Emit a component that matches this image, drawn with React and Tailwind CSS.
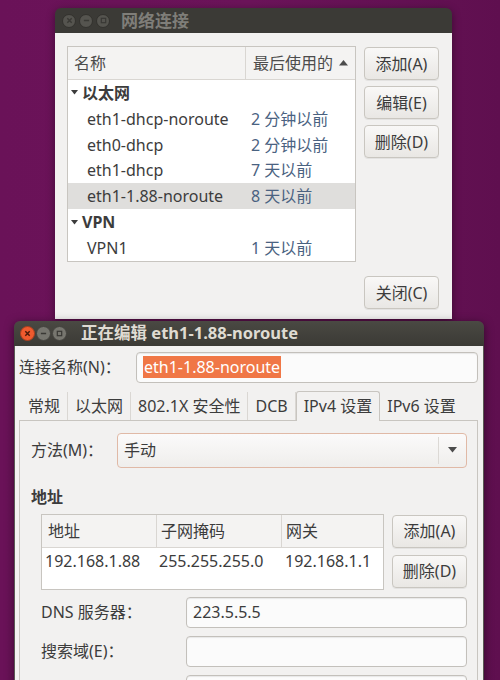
import React from 'react';

const font = { fontFamily: '"Noto Sans", "Noto Sans CJK SC", sans-serif' };

const WinButtons = ({ active }) => {
  const size = active ? 'w-[15px] h-[15px]' : 'w-[14px] h-[14px]';
  const grey = active ? 'bg-[#77766f] border-[#44433f]' : 'bg-[#55544f] border-[#33322e]';
  return (
    <div className={`flex items-center ${active ? 'gap-[1px]' : 'gap-[3px]'}`}>
      <span className={`${size} rounded-full flex items-center justify-center border ${active ? 'bg-[#ef5a2e] border-[#a8401f]' : grey}`}>
        <svg width="7" height="7" viewBox="0 0 8 8">
          <path d="M1.5 1.5 L6.5 6.5 M6.5 1.5 L1.5 6.5" stroke={active ? '#4a1a0a' : '#3a3935'} strokeWidth="1.7" />
        </svg>
      </span>
      <span className={`${size} rounded-full flex items-center justify-center border ${grey}`}>
        <svg width="7" height="7" viewBox="0 0 8 8">
          <path d="M1 4 L7 4" stroke="#3a3935" strokeWidth="1.7" />
        </svg>
      </span>
      <span className={`${size} rounded-full flex items-center justify-center border ${grey}`}>
        <svg width="7" height="7" viewBox="0 0 8 8">
          <rect x="1.5" y="1.5" width="5" height="5" fill="none" stroke="#3a3935" strokeWidth="1.4" />
        </svg>
      </span>
    </div>
  );
};

const Btn = ({ children, className = '' }) => (
  <div
    className={`flex items-center justify-center rounded-[4px] border border-[#c9c6c0] bg-gradient-to-b from-[#f9f8f7] to-[#e9e7e4] text-[16px] text-[#3c3c3c] shadow-[0_1px_0_rgba(0,0,0,0.06)] ${className}`}
  >
    {children}
  </div>
);

const Tri = () => (
  <svg width="7" height="5" viewBox="0 0 7 5" className="mr-[4px]">
    <path d="M0 0 L7 0 L3.5 4.5 Z" fill="#3c3c3c" />
  </svg>
);

const conns = [
  { type: 'cat', name: '以太网' },
  { name: 'eth1-dhcp-noroute', time: '2 分钟以前' },
  { name: 'eth0-dhcp', time: '2 分钟以前' },
  { name: 'eth1-dhcp', time: '7 天以前' },
  { name: 'eth1-1.88-noroute', time: '8 天以前', selected: true },
  { type: 'cat', name: 'VPN' },
  { name: 'VPN1', time: '1 天以前' },
];

const tabs = ['常规', '以太网', '802.1X 安全性', 'DCB', 'IPv4 设置', 'IPv6 设置'];

const Input = ({ children, className = '' }) => (
  <div className={`flex items-center rounded-[4px] border border-[#c3c0bb] bg-[#fbfbfb] px-[6px] text-[16px] text-[#3c3c3c] shadow-[inset_0_1px_1px_rgba(0,0,0,0.08)] ${className}`}>
    {children}
  </div>
);

export default function App() {
  return (
    <div className="relative w-[500px] h-[680px] overflow-hidden bg-gradient-to-r from-[#6a1258] via-[#6c145a] to-[#5f0f4f]" style={font}>
      {/* network connections window */}
      <div className="absolute left-[55px] top-[8px] w-[397px] h-[311px] flex flex-col rounded-t-[6px] overflow-hidden shadow-[0_2px_8px_rgba(0,0,0,0.4)]">
        <div className="h-[25px] bg-[#3b3a36] flex items-center pl-[7px]">
          <WinButtons />
          <span className="ml-[11px] text-[17px] font-bold text-[#7f7e79]">网络连接</span>
        </div>
        <div className="flex-1 bg-[#f2f1f0] flex flex-col px-[12px] pt-[13px]">
          <div className="flex gap-[8px]">
            <div className="w-[289px] h-[216px] border border-[#c8c5c0] bg-white flex flex-col">
              <div className="h-[33px] flex bg-[#f4f3f2] border-b border-[#d9d6d2] text-[16px] text-[#4c4c4c]">
                <div className="w-[178px] flex items-center pl-[6px] border-r border-[#d9d6d2]">名称</div>
                <div className="flex-1 flex items-center pl-[7px]">
                  最后使用的
                  <svg width="9" height="6" viewBox="0 0 9 6" className="ml-[6px]">
                    <path d="M0 5.5 L9 5.5 L4.5 0 Z" fill="#4c4c4c" />
                  </svg>
                </div>
              </div>
              {conns.map((c) =>
                c.type === 'cat' ? (
                  <div key={c.name} className="h-[26px] flex items-center pl-[3px] text-[16px] font-bold text-[#3c3c3c]">
                    <Tri />
                    {c.name}
                  </div>
                ) : (
                  <div key={c.name} className={`h-[26px] flex items-center text-[16px] ${c.selected ? 'bg-[#dfdedc]' : ''}`}>
                    <span className="w-[178px] pl-[19px] text-[#3c3c3c]">{c.name}</span>
                    <span className="pl-[5px] text-[#4a6281]">{c.time}</span>
                  </div>
                )
              )}
            </div>
            <div className="flex flex-col gap-[6px] pt-[1px]">
              <Btn className="w-[75px] h-[33px]">添加(A)</Btn>
              <Btn className="w-[75px] h-[33px]">编辑(E)</Btn>
              <Btn className="w-[75px] h-[33px]">删除(D)</Btn>
            </div>
          </div>
          <div className="flex justify-end mt-[14px] pr-[1px]">
            <Btn className="w-[75px] h-[33px]">关闭(C)</Btn>
          </div>
        </div>
      </div>

      {/* editing window */}
      <div className="absolute left-[14px] top-[321px] w-[470px] h-[370px] flex flex-col rounded-t-[6px] overflow-hidden shadow-[0_2px_10px_rgba(0,0,0,0.5)]">
        <div className="h-[27px] bg-gradient-to-b from-[#4a4943] to-[#3b3a35] flex items-center pl-[6px]">
          <WinButtons active />
          <span className="ml-[14px] text-[16.5px] font-bold text-[#dfdbd2]">正在编辑 eth1-1.88-noroute</span>
        </div>
        <div className="flex-1 bg-[#f2f1f0] flex flex-col pl-[4px] pr-[5px] border-x border-[#5a5954]">
          <div className="flex items-center mt-[6px] h-[31px]">
            <span className="w-[117px] text-[16px] text-[#3c3c3c]">连接名称(N)：</span>
            <Input className="flex-1 h-[31px] px-[5px]">
              <span className="bg-[#f07746] text-white px-[1px] leading-[22px]">eth1-1.88-noroute</span>
            </Input>
          </div>
          <div className="flex items-end mt-[8px] h-[29px] pl-[2px] text-[16px] text-[#3c3c3c]">
            {tabs.map((t) =>
              t === 'IPv4 设置' ? (
                <div key={t} className="h-[30px] px-[7px] flex items-center bg-[#f2f1f0] border border-b-0 border-[#c8c5c0] rounded-t-[3px] -mb-[1px] relative z-10">
                  {t}
                </div>
              ) : (
                <div key={t} className="h-[28px] px-[7px] flex items-center border-r border-[#dad7d3] last:border-r-0">
                  {t}
                </div>
              )
            )}
          </div>
          <div className="flex-1 border border-[#c8c5c0] bg-[#f2f1f0] flex flex-col pl-[11px] pr-[10px]">
            <div className="flex items-center mt-[12px] h-[35px]">
              <span className="w-[86px] text-[16px] text-[#3c3c3c]">方法(M)：</span>
              <div className="flex-1 h-[35px] flex rounded-[4px] border border-[#e0b9a6] bg-gradient-to-b from-[#fbfafa] to-[#efeeec]">
                <span className="flex-1 flex items-center pl-[6px] text-[16px] text-[#3c3c3c]">手动</span>
                <span className="w-[28px] flex items-center justify-center border-l border-[#dcd9d5] my-[3px]">
                  <svg width="9" height="6" viewBox="0 0 9 6">
                    <path d="M0 0 L9 0 L4.5 5.5 Z" fill="#4c4c4c" />
                  </svg>
                </span>
              </div>
            </div>
            <div className="mt-[18px] text-[16px] font-bold text-[#3c3c3c] leading-[22px]">地址</div>
            <div className="flex mt-[6px] pl-[10px] gap-[8px]">
              <div className="w-[345px] h-[76px] border border-[#c8c5c0] bg-white flex flex-col text-[16px] text-[#3c3c3c]">
                <div className="h-[33px] flex bg-[#f4f3f2] border-b border-[#d9d6d2]">
                  <div className="w-[115px] flex items-center pl-[6px] border-r border-[#d9d6d2]">地址</div>
                  <div className="w-[125px] flex items-center pl-[4px] border-r border-[#d9d6d2]">子网掩码</div>
                  <div className="flex-1 flex items-center pl-[4px]">网关</div>
                </div>
                <div className="h-[26px] flex items-center">
                  <span className="w-[115px] pl-[3px]">192.168.1.88</span>
                  <span className="w-[125px] pl-[2px]">255.255.255.0</span>
                  <span className="pl-[3px]">192.168.1.1</span>
                </div>
              </div>
              <div className="flex flex-col gap-[7px] pt-[1px]">
                <Btn className="w-[75px] h-[33px]">添加(A)</Btn>
                <Btn className="w-[75px] h-[33px]">删除(D)</Btn>
              </div>
            </div>
            <div className="flex items-center mt-[7px] pl-[10px] h-[31px]">
              <span className="w-[145px] text-[16px] text-[#3c3c3c]">DNS 服务器：</span>
              <Input className="flex-1 h-[31px]">223.5.5.5</Input>
            </div>
            <div className="flex items-center mt-[8px] pl-[10px] h-[31px]">
              <span className="w-[145px] text-[16px] text-[#3c3c3c]">搜索域(E)：</span>
              <Input className="flex-1 h-[31px]"></Input>
            </div>
            <div className="flex items-center mt-[8px] pl-[10px] h-[31px]">
              <span className="w-[145px]"></span>
              <Input className="flex-1 h-[31px]"></Input>
            </div>
          </div>
        </div>
      </div>
    </div>
  );
}
